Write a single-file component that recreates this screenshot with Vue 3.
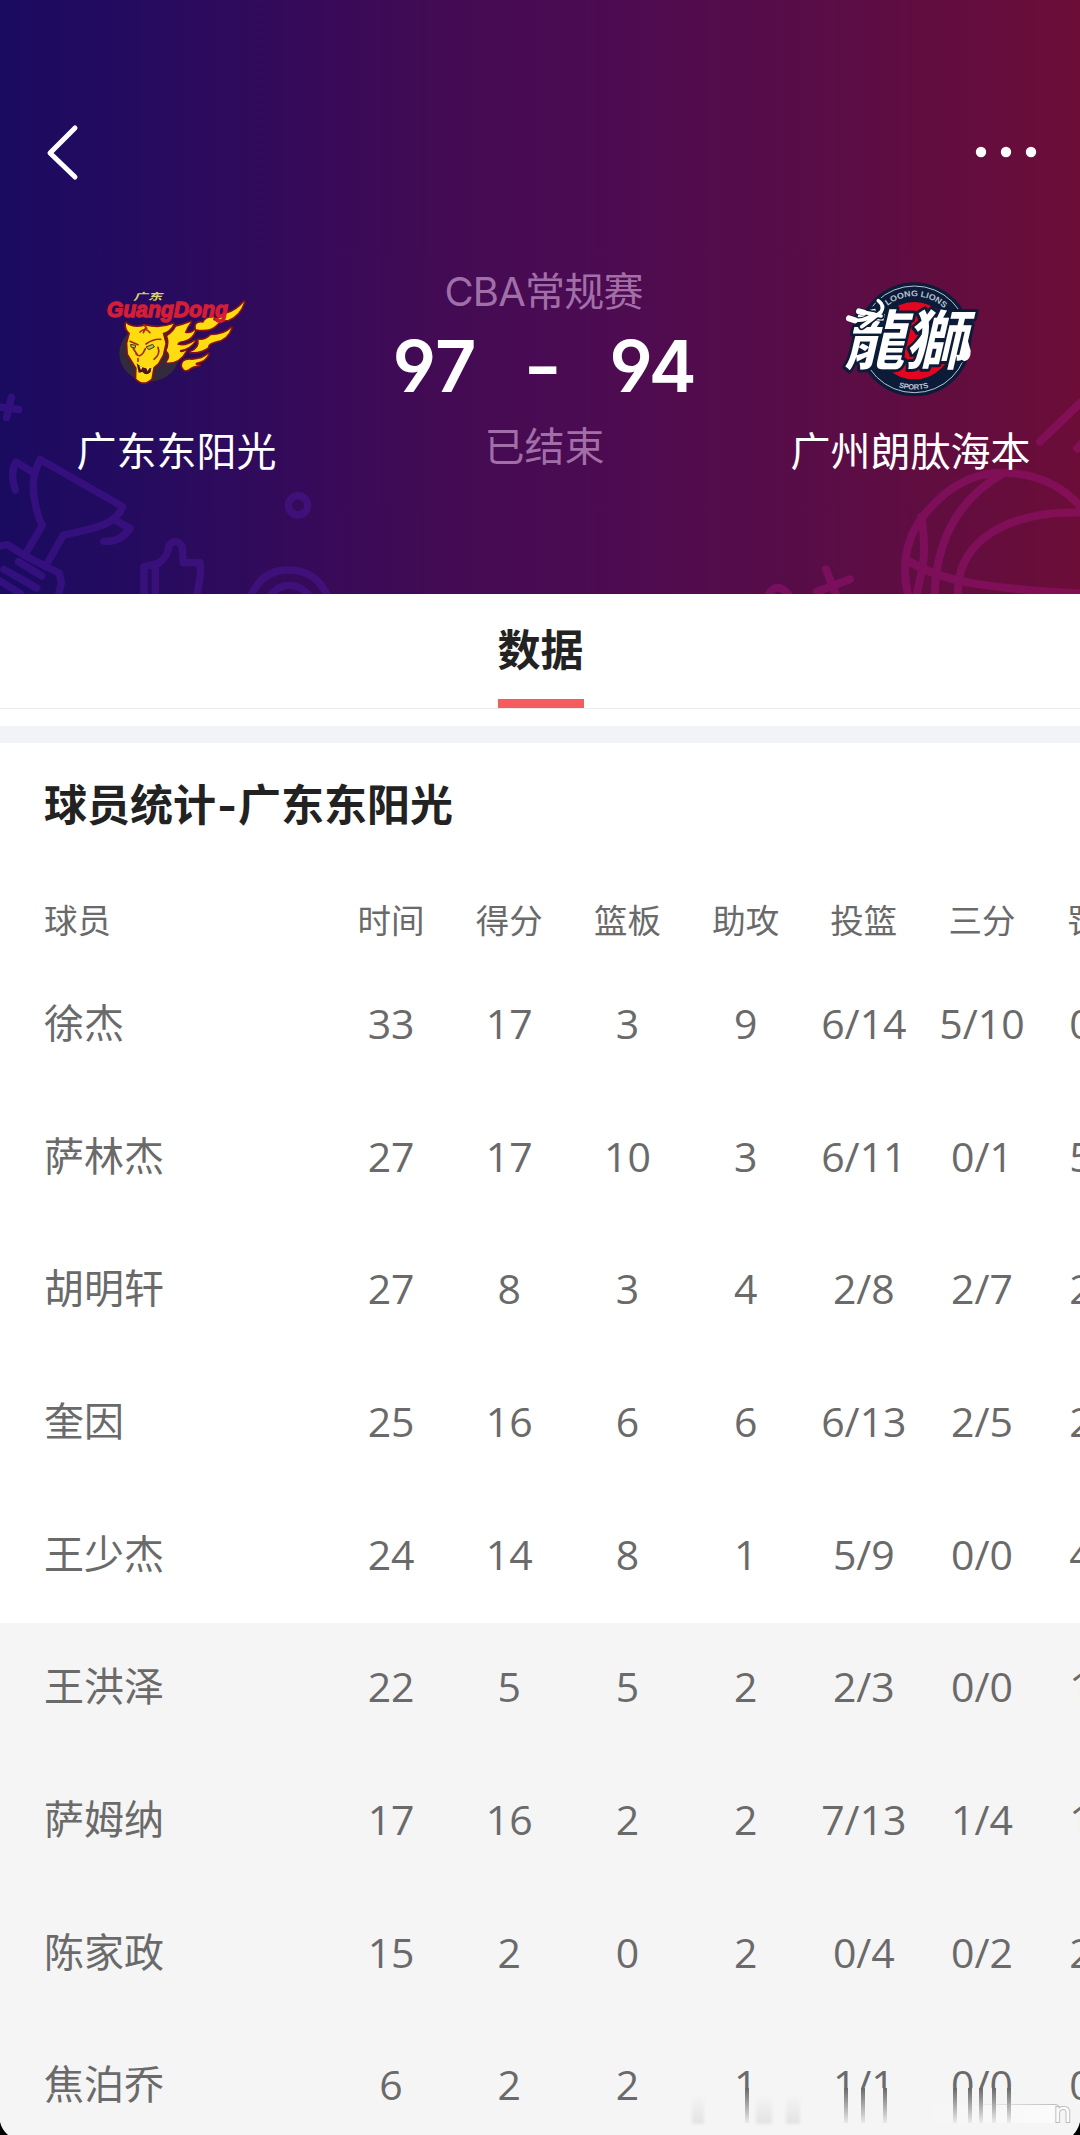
<script setup>
import { ref } from 'vue'

const match = {
  league: 'CBA常规赛',
  status: '已结束',
  home: { name: '广东东阳光', score: 97 },
  away: { name: '广州朗肽海本', score: 94 }
}

const columns = ['时间', '得分', '篮板', '助攻', '投篮', '三分', '罚篮']

const players = ref([
  { name: '徐杰', starter: true, stats: ['33', '17', '3', '9', '6/14', '5/10', '0/0'] },
  { name: '萨林杰', starter: true, stats: ['27', '17', '10', '3', '6/11', '0/1', '5/6'] },
  { name: '胡明轩', starter: true, stats: ['27', '8', '3', '4', '2/8', '2/7', '2/2'] },
  { name: '奎因', starter: true, stats: ['25', '16', '6', '6', '6/13', '2/5', '2/2'] },
  { name: '王少杰', starter: true, stats: ['24', '14', '8', '1', '5/9', '0/0', '4/4'] },
  { name: '王洪泽', starter: false, stats: ['22', '5', '5', '2', '2/3', '0/0', '1/2'] },
  { name: '萨姆纳', starter: false, stats: ['17', '16', '2', '2', '7/13', '1/4', '1/2'] },
  { name: '陈家政', starter: false, stats: ['15', '2', '0', '2', '0/4', '0/2', '2/2'] },
  { name: '焦泊乔', starter: false, stats: ['6', '2', '2', '1', '1/1', '0/0', '0/0'] }
])

const streaks = [67, 166, 183, 205, 275, 290, 301, 314, 329]
</script>

<template>
  <div class="page">
    <header class="hero">
      <svg class="hero-art" viewBox="0 0 1080 594" fill="none" stroke-linecap="round" stroke-linejoin="round">
        <!-- cup, thumb and rings -->
        <g transform="translate(0 370) scale(.33333)" stroke-width="22" class="art-left">
          <path d="M34 82L20 142M-8 110L56 119" />
          <path d="M120 268L368 410Q350 452 300 468T190 495L136 590M120 268Q90 330 104 390Q112 440 127 466L76 552" />
          <path d="M46 360Q28 310 48 276L100 308M340 448L390 475Q360 518 312 514" />
          <path d="M-10 530L22 524L76 558L178 610L184 640L174 680M12 598L110 654M-5 630L60 670M55 575L125 618" />
          <path d="M432 680V590L475 580Q505 560 506 528Q526 500 546 528L550 578H600L602 610L590 680M466 590V680" />
          <circle cx="894" cy="406" r="29" />
          <path d="M752 680Q784 600 866 600T984 680M808 680Q835 645 870 646T930 680" />
        </g>
        <!-- basketball -->
        <g transform="translate(720 370) scale(.33333)" stroke-width="24" class="art-right">
          <path d="M1090 90L960 215M1072 236L1090 215" />
          <path d="M570 700Q525 540 616 430Q720 305 850 308Q1000 310 1090 420" />
          <path d="M850 310Q640 430 644 700M1090 428Q900 420 790 505Q700 580 716 700" />
          <path d="M604 440Q620 540 604 610L588 680M560 570Q640 620 760 640T1090 672" />
          <path d="M145 675Q172 632 205 675M318 598L350 680M290 665L390 628" />
        </g>
      </svg>

      <nav class="topbar">
        <svg class="back" viewBox="0 0 36 60">
          <path d="M31 6L6 31L31 55" />
        </svg>
        <svg class="more" viewBox="0 0 62 12">
          <circle cx="6" cy="6" r="5.2" />
          <circle cx="31" cy="6" r="5.2" />
          <circle cx="56" cy="6" r="5.2" />
        </svg>
      </nav>

      <div class="match">
        <div class="team">
          <svg class="logo-home" viewBox="6 -30 510 420">
            <ellipse cx="178" cy="220" rx="90" ry="85" fill="#332b3c" />
            <g fill="#ffdc12" stroke="#851313" stroke-width="10" paint-order="stroke" stroke-linejoin="round">
              <path d="M108 130Q130 148 166 137Q210 148 250 132Q240 154 218 159L226 190L218 225L204 250L190 262L184 296Q160 318 139 296L140 264L114 222L112 190L120 160Q106 148 108 130Z" />
              <path d="M232 168Q252 154 258 140Q278 136 302 126Q290 142 284 158Q304 164 317 148Q306 178 282 182Q262 184 262 194Q286 202 315 182Q300 206 270 210Q266 222 288 212Q268 250 230 247Q246 226 230 212Q240 190 232 168Z" />
              <path d="M318 148Q312 124 340 128Q346 112 372 112Q366 122 374 122Q396 112 412 100Q440 92 462 66Q450 106 414 120Q392 118 378 136Q360 154 318 148Z" />
              <path d="M302 216Q330 206 326 180Q348 182 362 166Q402 166 424 144Q412 178 378 184Q352 190 354 202Q334 218 302 216Z" />
              <path d="M276 258Q276 236 306 240Q338 238 355 222Q346 244 318 248Q312 256 328 256Q306 258 296 268Q282 276 276 258Z" />
            </g>
            <g fill="none" stroke="#a6281a" stroke-width="5" stroke-linecap="round">
              <path d="M162 134L170 145M150 156Q166 140 180 158M166 145L160 158" />
              <path d="M120 184L144 194M168 192Q190 176 212 178M138 222Q150 234 160 218M130 206L142 224M160 218L166 206M144 236L144 244M192 238Q212 222 204 202" />
            </g>
            <path d="M140 250Q160 270 184 264L182 276Q168 290 158 276L146 278Z" fill="#501319" />
            <path d="M148 258l5 12 5-10M168 262l5 12 6-12" fill="#ffe45a" />
            <path d="M122 193l15 3-2 9-12-4zM168 201l20-8 5 8-16 8z" fill="#b7bf43" stroke="#433413" stroke-width="3" />
            <text x="130" y="60" class="home-cn" textLength="86" lengthAdjust="spacingAndGlyphs">广东</text>
            <text x="50" y="110" class="home-en" textLength="364" lengthAdjust="spacingAndGlyphs">GuangDong</text>
          </svg>
          <p class="team-name">{{ match.home.name }}</p>
        </div>

        <div class="result">
          <p class="league">{{ match.league }}</p>
          <div class="score">
            <span>{{ match.home.score }}</span>
            <span class="dash">-</span>
            <span>{{ match.away.score }}</span>
          </div>
          <p class="status">{{ match.status }}</p>
        </div>

        <div class="team away">
          <svg class="logo-away" viewBox="30 0 600 420">
            <defs>
              <path id="arcTop" d="M211 208A129 129 0 0 1 469 208" />
              <path id="arcBottom" d="M189 208A151 151 0 0 0 491 208" />
            </defs>
            <circle cx="340" cy="208" r="171" fill="#0c1b38" />
            <circle cx="340" cy="208" r="160" fill="none" stroke="#b9c3d4" stroke-width="3" />
            <circle cx="340" cy="212" r="116" fill="#e4061f" />
            <g transform="translate(128 281) skewX(-13) scale(1 1.02)">
              <text class="lion-text" x="0" y="0" textLength="366" lengthAdjust="spacingAndGlyphs">龍獅</text>
            </g>
            <g fill="none" stroke-linecap="round">
              <path d="M148 145Q182 165 218 132M174 124Q210 130 240 138M232 92Q252 106 240 126Q214 148 182 170" stroke="#0c1b38" stroke-width="21" />
              <path d="M142 144Q182 162 218 132M174 124Q210 130 240 138M232 92Q252 106 240 126Q214 148 182 170" stroke="#fff" stroke-width="11" />
              <path d="M144 145L162 151M174 124L188 128" stroke="#fff" stroke-width="18" />
            </g>
            <path d="M500 210Q486 230 480 243Q473 268 490 274Q510 268 509 242Z" fill="#fff" />
            <text class="ring-text"><textPath href="#arcTop" startOffset="51.5%" text-anchor="middle" textLength="186" lengthAdjust="spacingAndGlyphs">LOONG LIONS</textPath></text>
            <text class="ring-text small"><textPath href="#arcBottom" startOffset="49.5%" text-anchor="middle" textLength="92">SPORTS</textPath></text>
          </svg>
          <p class="team-name">{{ match.away.name }}</p>
        </div>
      </div>
    </header>

    <div class="tabs">
      <span class="tab active">数据</span>
    </div>

    <section class="stats">
      <h2>球员统计<span class="hyphen">-</span>{{ match.home.name }}</h2>

      <div class="row head">
        <span class="name">球员</span>
        <span v-for="col in columns" :key="col" class="cell">{{ col }}</span>
      </div>

      <div v-for="p in players" :key="p.name" class="row" :class="{ bench: !p.starter }">
        <span class="name">{{ p.name }}</span>
        <span v-for="(s, i) in p.stats" :key="i" class="cell">{{ s }}</span>
      </div>
    </section>

    <!-- faded strip along the bottom edge -->
    <svg class="fade" viewBox="0 0 400 50">
      <defs>
        <linearGradient id="streak" x1="0" y1="0" x2="0" y2="1">
          <stop offset="0" stop-color="#6a6a6a" />
          <stop offset="1" stop-color="#6a6a6a" stop-opacity="0.08" />
        </linearGradient>
        <linearGradient id="smudge" x1="0" y1="0" x2="0" y2="1">
          <stop offset="0" stop-color="#ccc" stop-opacity="0" />
          <stop offset="1" stop-color="#ccc" stop-opacity="0.45" />
        </linearGradient>
        <linearGradient id="glow" x1="0" y1="0" x2="1" y2="0">
          <stop offset="0" stop-color="#fff" stop-opacity="0" />
          <stop offset="1" stop-color="#fff" />
        </linearGradient>
        <linearGradient id="edge" gradientUnits="userSpaceOnUse" x1="290" y1="0" x2="380" y2="0">
          <stop offset="0" stop-color="#bbb" stop-opacity="0" />
          <stop offset="1" stop-color="#bbb" />
        </linearGradient>
        <filter id="soft"><feGaussianBlur stdDeviation="1.6" /></filter>
      </defs>
      <rect x="0" y="3" width="386" height="37" fill="#f5f5f5" />
      <g filter="url(#soft)" fill="url(#smudge)">
        <rect x="12" y="10" width="12" height="29" />
        <rect x="76" y="10" width="16" height="29" />
        <rect x="106" y="10" width="14" height="29" />
      </g>
      <rect x="240" y="20" width="138" height="18" fill="url(#glow)" opacity=".6" />
      <rect v-for="x in streaks" :key="x" :x="x - 2" y="3" width="4" height="35" fill="url(#streak)" />
      <path d="M290 19.500H376L379 21" fill="none" stroke="url(#edge)" />
      <text x="374" y="37" class="mark">n</text>
    </svg>

    <svg class="corner left" viewBox="0 0 8 13"><path d="M0 0Q2 8 8 13H0Z" /></svg>
    <svg class="corner right" viewBox="0 0 8 13"><path d="M8 0Q6 8 1 13H8Z" /></svg>
  </div>
</template>

<style>
body { background: #fff; overflow: hidden; }
</style>

<style scoped>
p, h2 { margin: 0; }
.page { position: relative; width: 1080px; height: 2135px; overflow: hidden; background: #fff; font-family: Inter, "Noto Sans CJK SC", sans-serif; color: #6a6a6a; }

.hero { position: relative; height: 594px; padding-top: 112px; box-sizing: border-box; background: linear-gradient(90deg, #1a0b60 0, #200b60 80px, #290b5e 180px, #350a5a 300px, #420b54 430px, #4b0b52 580px, #520c4d 700px, #5d0d43 880px, #6c0d38 1080px); color: #fff; }
.hero-art { position: absolute; inset: 0; width: 1080px; height: 594px; }
.art-left { stroke: #4f18a0; opacity: 0.45; }
.art-right { stroke: #a0127a; opacity: 0.45; }

.topbar { position: relative; display: flex; align-items: center; justify-content: space-between; height: 80px; padding: 0 43px 0 44px; }
.back { width: 36px; height: 60px; fill: none; stroke: #fff; stroke-width: 5; stroke-linecap: round; stroke-linejoin: round; }
.more { width: 62px; height: 12px; fill: #fff; }

.match { position: relative; display: grid; grid-template-columns: 353px 380px 1fr; }
.team { display: flex; flex-direction: column; align-items: center; padding-top: 78px; }
.team.away { padding-left: 8px; }
.logo-home { width: 170px; height: 140px; }
.logo-away { width: 200px; height: 140px; }
.team-name { margin-top: 12px; font-size: 40px; line-height: 60px; white-space: nowrap; }
.home-cn { font: italic 700 29px "Noto Sans CJK SC", sans-serif; fill: #ddd36a; }
.home-en { font: italic 700 68px "Liberation Sans", sans-serif; fill: #d51e36; stroke: #d51e36; stroke-width: 4; }
.ring-text { font: 700 25px "Liberation Sans", sans-serif; fill: #b9c3d4; }
.ring-text.small { font-size: 23px; }
.lion-text { font: 700 190px "Noto Sans CJK TC", sans-serif; fill: #fff; stroke: #0c1b38; stroke-width: 18; paint-order: stroke; stroke-linejoin: round; }

.result { display: flex; flex-direction: column; align-items: center; padding: 70px 0 0 1px; }
.league, .status { font-size: 40px; line-height: 60px; color: rgba(222, 180, 226, 0.6); font-weight: 400; }
.league { letter-spacing: -0.8px; }
.score { display: flex; align-items: center; justify-content: space-between; width: 300px; height: 86px; margin-right: 5px; font-size: 72px; font-weight: 600; letter-spacing: -5px; font-feature-settings: "cv03", "cv04", "tnum"; }
.dash { margin-left: -3px; transform: scaleX(1.15); }
.status { margin-top: 9px; padding-left: 2px; }

.tabs { display: flex; justify-content: center; height: 114px; border-bottom: 1px solid #ebebeb; padding-left: 1px; }
.tab { height: 114px; padding-top: 25px; box-sizing: border-box; font-size: 43px; line-height: 62px; font-weight: 700; color: #222; }
.tab.active { border-bottom: 9px solid #f55d5c; }

.stats { margin-top: 17px; border-top: 17px solid #f2f3f8; }
h2 { padding: 29px 44px 0; font-size: 43px; line-height: 66px; font-weight: 700; color: #222; white-space: nowrap; }
.hyphen { display: inline-block; width: 22px; text-align: center; }
.row { display: flex; align-items: center; height: 132.7px; padding: 0 0 7px 44px; box-sizing: border-box; font-size: 40px; white-space: nowrap; }
.row.head { height: 122px; padding: 39px 0 0 44px; font-size: 33.500px; }
.bench { background: #f5f5f5; }
.name { flex: 0 0 288px; margin-top: -4px; }
.cell { flex: 0 0 118.2px; display: flex; justify-content: center; font-family: "Open Sans", "Noto Sans CJK SC", sans-serif; font-size: 41px; }
.head .name { margin-top: 0; }
.head .cell { font-family: inherit; font-size: inherit; }

.fade { position: absolute; left: 680px; top: 2085px; width: 400px; height: 50px; }
.mark { font: 28px "Noto Sans", sans-serif; fill: #fff; stroke: #bbb; stroke-width: 2; paint-order: stroke; }
.corner { position: absolute; bottom: 0; width: 8px; height: 13px; fill: #000; }
.corner.left { left: 0; }
.corner.right { right: 0; }
</style>
